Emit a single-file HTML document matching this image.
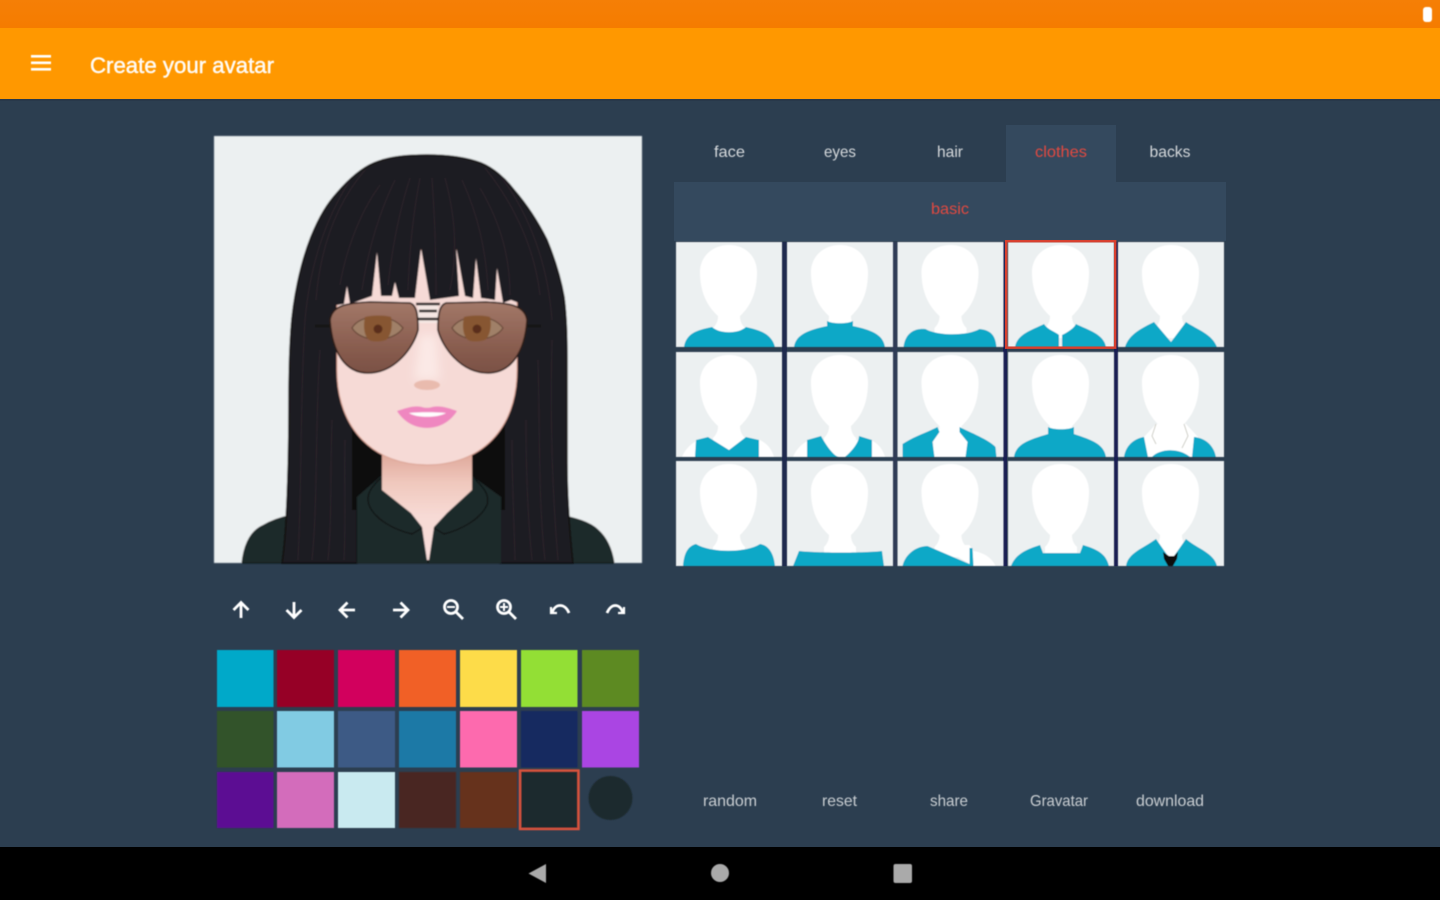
<!DOCTYPE html>
<html lang="en">
<head>
<meta charset="utf-8">
<title>Create your avatar</title>
<style>
html,body{margin:0;padding:0;width:1440px;height:900px;overflow:hidden;background:#2c3e50}
svg{position:absolute;left:0;top:0;display:block}
text{font-family:"Liberation Sans",sans-serif}
</style>
</head>
<body>
<svg width="1440" height="900" viewBox="0 0 1440 900" xmlns="http://www.w3.org/2000/svg">
<defs>
<filter id="soft" x="-2%" y="-2%" width="104%" height="104%"><feGaussianBlur stdDeviation="0.8"/></filter>
<filter id="softT" x="-10%" y="-30%" width="120%" height="160%"><feGaussianBlur stdDeviation="0.6"/></filter>
<filter id="softS" x="-10%" y="-10%" width="120%" height="120%"><feGaussianBlur stdDeviation="0.4"/></filter>
<filter id="softL" x="-30%" y="-30%" width="160%" height="160%"><feGaussianBlur stdDeviation="5"/></filter>
<linearGradient id="lens" x1="0" y1="0" x2="0" y2="1"><stop offset="0" stop-color="#a27868"/><stop offset=".6" stop-color="#8a5e50"/><stop offset="1" stop-color="#7a5044"/></linearGradient>
<linearGradient id="neck" x1="0" y1="0" x2="0" y2="1"><stop offset="0" stop-color="#dca496"/><stop offset=".3" stop-color="#f0c8bd"/><stop offset=".6" stop-color="#f7dad5"/><stop offset="1" stop-color="#f8dedb"/></linearGradient>
<linearGradient id="orange" x1="0" y1="0" x2="0" y2="1"><stop offset="0" stop-color="#f57f06"/><stop offset="1" stop-color="#f57c00"/></linearGradient>
<g id="bl">
<rect width="106" height="105" fill="#ecf0f1"/>
<path fill="#fff" d="M53,3C70,3 81,15 81,30C81,50 75,64 64,74C64,78 65,82 69,86V96H37V86C41,82 42,78 42,74C31,64 24,50 24,30C24,15 36,3 53,3Z"/>
</g>
</defs>

<rect width="1440" height="900" fill="#2c3e50"/>
<rect y="0" width="1440" height="28" fill="url(#orange)"/>
<rect y="28" width="1440" height="71" fill="#ff9800"/>
<rect y="99" width="1440" height="2" fill="#28384a"/>
<rect x="1423" y="7" width="9" height="15" rx="3" fill="#fff" filter="url(#softT)"/>
<g fill="#fff" filter="url(#softT)">
<rect x="31" y="55" width="20" height="2.6"/><rect x="31" y="61.5" width="20" height="2.6"/><rect x="31" y="68" width="20" height="2.6"/>
</g>
<text x="90" y="73" font-size="22" fill="#fff" stroke="#fff" stroke-width=".45" fill-opacity=".95" textLength="184" lengthAdjust="spacingAndGlyphs" filter="url(#softT)">Create your avatar</text>

<!-- avatar -->
<g filter="url(#soft)">
<rect x="214" y="136" width="428" height="427" fill="#ecf0f1"/>
<path fill="#1f2c2c" stroke="#0f1516" stroke-width="1" d="M242,563C244,545 250,532 262,526C272,520 282,517 292,515L560,515C575,518 590,522 598,530C607,538 612,550 614,563Z"/>
<path fill="#1f1a20" stroke="#0a080a" stroke-width="1.5" d="M282,563C287,530 289,463 289,397C289,370 290,345 291,330C293,300 300,265 311,237C320,215 328,203 337,193C350,178 362,168 374,163C390,156 410,155 427,155C445,155 465,157 481,163C493,168 505,178 514,190C527,205 538,222 547,240C556,262 561,280 564,297C567,320 567,345 567,363C567,400 567,440 567,463C567,500 570,535 573,563H500V500H357V563Z"/>
<path fill="#0c090c" d="M352,405H505V510H352Z"/>
<path fill="#1f2c2c" d="M357,563V497L381,476H472L501,497V563Z"/>
<path fill="url(#neck)" d="M382,450V490L411,513L422,527L427,560L429,560L434,527L447,513L472,490V450Z"/>
<path fill="none" stroke="#0d1415" stroke-width="1.6" d="M381,478C370,488 366,495 369,505C375,520 395,530 412,534L422,528M474,478C484,488 490,495 487,505C480,520 460,530 444,534L434,528M428,560V563"/>
<path fill="#f6dad6" stroke="#dba394" stroke-width="1" d="M337,300L360,250H500L512,296L517,300V370C517,430 480,465 427,465C375,465 337,430 337,370Z"/>
<path fill="#fbe9e6" filter="url(#softL)" d="M420,335H436L440,380H414Z"/>
<ellipse cx="427" cy="385" rx="13" ry="5" fill="#e9bbae"/>
<path fill="#1f1a20" d="M330,306C330,230 370,170 427,170C490,170 532,230 532,306L519,303L511,300L503,303L497,268L495,300L481,298L476,258L473,298L465,296L456,246L459,296L430,300L421,248L415,298L399,298L395,282L392,296L381,296L377,252L372,296L350,304L347,286L344,304Z"/>
<g fill="none" stroke="#3d343b" stroke-width="1.2" opacity=".35">
<path d="M380,185C358,215 345,255 340,285M395,180C378,215 368,250 362,290M410,178C398,215 392,250 388,285M420,178C414,210 410,240 408,290M432,178C434,210 436,240 436,295M445,178C455,215 458,250 450,290M462,180C478,215 486,250 488,290M480,188C502,225 510,260 510,295"/>
<path d="M350,180C325,220 310,265 305,320M365,170C335,205 320,250 316,300"/>
<path d="M500,175C530,215 548,265 552,320M485,168C515,205 535,250 540,295"/>
<path d="M305,320C300,400 302,480 298,560M320,350C315,420 318,500 312,560M332,420C330,480 332,520 328,560M345,440C344,480 346,520 344,560"/>
<path d="M552,340C550,420 552,490 558,560M538,360C540,420 538,500 545,560M526,420C526,480 528,520 532,560M512,440C512,480 514,520 515,560"/>
</g>
<!-- glasses -->
<path fill="#f5e7e3" d="M418,303H438V323H418Z"/>
<path stroke="#1d1416" stroke-width="2.4" fill="none" d="M416,304H440M419,311H437M418,319H438"/>
<path stroke="#181214" stroke-width="3" fill="none" d="M315,326H332M524,326H541"/>
<g fill="url(#lens)" stroke="#2a1a18" stroke-width="1.6">
<path d="M330,320C332,306 345,303 370,302L410,303C416,305 418,312 418,330C414,346 396,373 368,373C345,373 332,352 330,320Z"/>
<path d="M527,320C525,306 511,303 486,302L446,303C440,305 438,312 438,330C442,346 460,373 488,373C511,373 525,352 527,320Z"/>
</g>
<path d="M352,328C360,314 390,312 403,328C394,342 362,344 352,328Z" fill="#a08068" stroke="#5c3c2e" stroke-width="1"/>
<path d="M365,317C372,315 385,315 391,317C393,326 391,336 386,340C380,342 372,342 369,340C364,336 363,326 365,317Z" fill="#875630"/>
<circle cx="378" cy="329" r="4.500" fill="#5a2f1a"/>
<path d="M452,328C461,314 491,312 503,328C494,342 462,344 452,328Z" fill="#a08068" stroke="#5c3c2e" stroke-width="1"/>
<path d="M464,317C471,315 484,315 490,317C492,326 490,336 485,340C479,342 471,342 468,340C463,336 462,326 464,317Z" fill="#875630"/>
<circle cx="477" cy="329" r="4.500" fill="#5a2f1a"/>
<!-- lips -->
<path fill="#ef87c0" d="M397,411C406,408 414,405 422,407C425,408 429,408 432,407C440,405 449,408 457,411C451,421 440,428 427,428C414,428 403,421 397,411Z"/>
<path fill="#fff" d="M409,413C420,412 435,412 446,413C438,418 416,418 409,413Z"/>
</g>

<!-- tabs -->
<rect x="1006" y="125" width="110" height="58" fill="#34495e"/>
<rect x="674" y="182" width="552" height="59" fill="#34495e"/>
<g font-size="16" text-anchor="middle" fill="#d5d9dc" filter="url(#softT)">
<text x="729.500" y="157" textLength="31" lengthAdjust="spacingAndGlyphs">face</text>
<text x="840" y="157" textLength="32" lengthAdjust="spacingAndGlyphs">eyes</text>
<text x="950" y="157" textLength="26" lengthAdjust="spacingAndGlyphs">hair</text>
<text x="1061" y="157" textLength="52" lengthAdjust="spacingAndGlyphs" fill="#e2493f">clothes</text>
<text x="1170" y="157" textLength="41" lengthAdjust="spacingAndGlyphs">backs</text>
<text x="950" y="214" textLength="38" lengthAdjust="spacingAndGlyphs" fill="#e2493f">basic</text>
<g fill="#c9ced2">
<text x="730" y="806" textLength="54" lengthAdjust="spacingAndGlyphs">random</text>
<text x="839.500" y="806" textLength="35" lengthAdjust="spacingAndGlyphs">reset</text>
<text x="949" y="806" textLength="38" lengthAdjust="spacingAndGlyphs">share</text>
<text x="1059" y="806" textLength="58" lengthAdjust="spacingAndGlyphs">Gravatar</text>
<text x="1170" y="806" textLength="68" lengthAdjust="spacingAndGlyphs">download</text>
</g>
</g>

<!-- thumbnails -->
<rect x="782" y="242" width="5" height="324" fill="#1f2a4d"/>
<rect x="892" y="242" width="5" height="324" fill="#2f3b55"/>
<rect x="1003" y="242" width="4" height="324" fill="#1a1f52"/>
<rect x="1114" y="242" width="4" height="324" fill="#1a1f52"/>
<g filter="url(#softS)">
<g transform="translate(676,242)"><use href="#bl"/><path fill="#07a8c7" d="M8,105C10,92 20,88 36,85C44,92 62,92 70,85C84,88 96,92 99,105Z"/></g>
<g transform="translate(787,242)"><use href="#bl"/><path fill="#07a8c7" d="M7,105C9,92 22,88 40,84V79C46,82 60,82 66,79V84C84,88 96,92 98,105Z"/></g>
<g transform="translate(897.500,242)"><use href="#bl"/><path fill="#07a8c7" d="M6,105C8,90 18,86 28,87C40,94 70,94 82,87C92,88 98,92 99,105Z"/></g>
<g transform="translate(1008,242)"><use href="#bl"/><path fill="#07a8c7" d="M7,105C9,92 24,88 36,82C40,88 48,90 51,93V105H54V93C60,90 66,86 68,82C80,88 96,92 98,105Z"/></g>
<g transform="translate(1118,242)"><use href="#bl"/><path fill="#07a8c7" d="M7,105C11,92 24,86 36,80L53,100L68,80C80,88 94,92 99,105Z"/></g>

<g transform="translate(676,352)"><use href="#bl"/><path fill="#fff" d="M6,105C10,95 18,90 22,88H84C92,92 96,98 98,105Z"/><path fill="#07a8c7" d="M19,105L20,88L32,85L53,98L70,85L83,88V105Z"/></g>
<g transform="translate(787,352)"><use href="#bl"/><path fill="#fff" d="M6,105C10,95 18,90 22,88H84C92,92 96,98 98,105Z"/><path fill="#07a8c7" d="M20,105V88L34,84C40,95 48,105 52,105H58C66,98 72,90 72,84L85,88V105Z"/></g>
<g transform="translate(897.500,352)"><use href="#bl"/><rect x="36" y="82" width="34" height="23" fill="#fff"/><path fill="#07a8c7" d="M5,105V92C15,85 30,80 40,75L42,80L35,90L37,105Z"/><path fill="#07a8c7" d="M62,75C72,80 92,88 98,95L99,105H68L70,90L62,80Z"/></g>
<g transform="translate(1008,352)"><use href="#bl"/><path fill="#07a8c7" d="M6,105C8,92 20,88 40,82V75C46,78 60,78 66,75V82C84,88 96,92 98,105Z"/></g>
<g transform="translate(1118,352)"><use href="#bl"/><path fill="#fff" d="M26,85L38,72H68L80,85V105H26Z"/><path fill="none" stroke="#cfcfc8" d="M38,72L34,84L38,92M66,72L70,84L64,96"/><path fill="#07a8c7" d="M6,105C8,92 18,86 26,85L30,105ZM76,85C88,86 96,94 98,105H74ZM34,105C42,96 62,96 72,105Z"/></g>

<g transform="translate(676,461)"><use href="#bl"/><path fill="#07a8c7" d="M7,105C8,92 12,85 20,83C35,92 70,92 84,83C92,84 98,92 99,105Z"/></g>
<g transform="translate(787,461)"><use href="#bl"/><path fill="#07a8c7" d="M6,105L12,90C30,92 78,92 95,90L97,105Z"/></g>
<g transform="translate(897.500,461)"><use href="#bl"/><path fill="#fff" d="M40,84H72L76,90C88,92 95,98 98,105H76Z"/><path fill="#07a8c7" d="M5,105C8,92 20,85 30,85L72,103V87H75L76,105Z"/></g>
<g transform="translate(1008,461)"><use href="#bl"/><path fill="#07a8c7" d="M3,105C8,92 20,88 32,84L35,92H72L75,84C88,88 98,92 101,105Z"/></g>
<g transform="translate(1118,461)"><use href="#bl"/><path fill="#07a8c7" d="M8,105C10,92 24,88 38,78L50,95H56L68,78C80,88 96,92 99,105Z"/><path fill="#0c0c0c" d="M45,91L51,95H56L60,91L59,98L55,105H50L46,98Z"/></g>
</g>
<rect x="1006.200" y="241.200" width="109" height="106.500" fill="none" stroke="#d8402f" stroke-width="2.400"/>

<!-- toolbar icons -->
<g fill="none" stroke="#fff" stroke-width="2.800" filter="url(#softT)">
<path d="M241,618V603M233.500,610L241,602.500L248.500,610"/>
<path d="M294,602V617M286.500,610L294,617.500L301.500,610"/>
<path d="M355,610H340M347.500,602.500L340,610L347.500,617.500"/>
<path d="M393,610H408M400.500,602.500L408,610L400.500,617.500"/>
<circle cx="451" cy="607" r="6.500"/><path d="M456,612L463,619"/><path stroke-width="2" d="M447,607H455"/>
<circle cx="504" cy="607" r="6.500"/><path d="M509,612L516,619"/><path stroke-width="2" d="M500,607H508M504,603V611"/>
<path d="M552,613C555,603 565,603 569,613"/><path stroke-width="2.200" d="M551,607V613H557"/>
<path d="M607,613C611,603 620,603 623,613"/><path stroke-width="2.200" d="M624,607V613H618"/>
</g>

<!-- palette -->
<g filter="url(#softS)">
<rect x="217" y="650" width="56.500" height="57" fill="#06a9c9"/>
<rect x="277" y="650" width="57" height="57" fill="#960028"/>
<rect x="338" y="650" width="57" height="57" fill="#d2005d"/>
<rect x="399" y="650" width="57" height="57" fill="#f16126"/>
<rect x="460" y="650" width="57" height="57" fill="#fddc4a"/>
<rect x="521" y="650" width="56.500" height="57" fill="#93df36"/>
<rect x="582" y="650" width="57" height="57" fill="#5d8a24"/>
<rect x="217" y="711" width="56.500" height="56.500" fill="#33532a"/>
<rect x="277" y="711" width="57" height="56.500" fill="#81cbe3"/>
<rect x="338" y="711" width="57" height="56.500" fill="#3d5a85"/>
<rect x="399" y="711" width="57" height="56.500" fill="#1e79a6"/>
<rect x="460" y="711" width="57" height="56.500" fill="#fd6bae"/>
<rect x="521" y="711" width="56.500" height="56.500" fill="#142c61"/>
<rect x="582" y="711" width="57" height="56.500" fill="#aa45e3"/>
<rect x="217" y="772" width="56.500" height="56" fill="#5c0e93"/>
<rect x="277" y="772" width="57" height="56" fill="#d36cbb"/>
<rect x="338" y="772" width="57" height="56" fill="#c9eaf0"/>
<rect x="399" y="772" width="57" height="56" fill="#4a2722"/>
<rect x="460" y="772" width="57" height="56" fill="#66321e"/>
<rect x="520" y="770.500" width="58.500" height="58.500" fill="#1f2b2e" stroke="#d8533c" stroke-width="2.400"/>
<circle cx="610.500" cy="798" r="22" fill="#1f2b2e"/>
</g>

<!-- nav bar -->
<rect y="847" width="1440" height="53" fill="#000"/>
<g fill="#aaa" filter="url(#softT)">
<path d="M528.500,873.500L546,864V883Z"/>
<circle cx="720" cy="873" r="9"/>
<rect x="893.500" y="864" width="18.500" height="19" rx="2"/>
</g>
</svg>
</body>
</html>
